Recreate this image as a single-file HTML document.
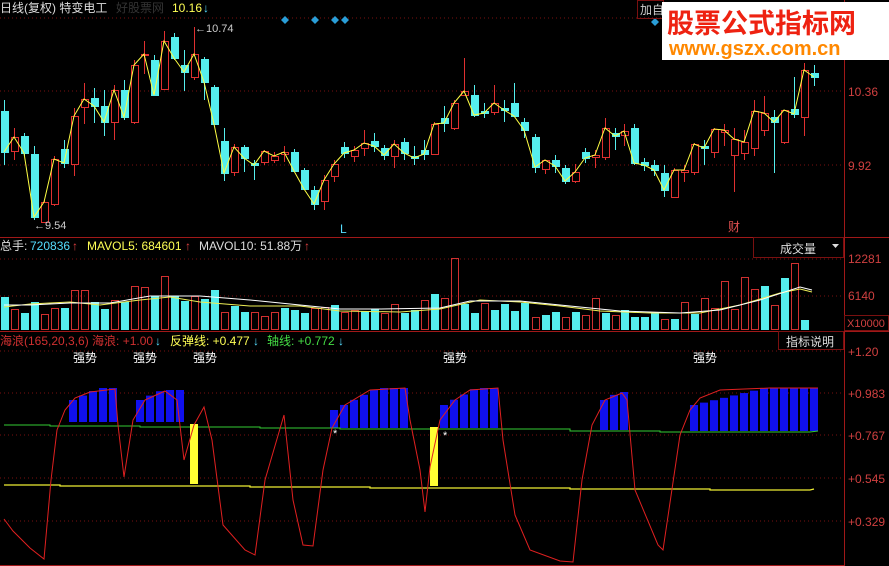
<!DOCTYPE html>
<html><head><meta charset="utf-8">
<style>
html,body{margin:0;padding:0;background:#000;width:889px;height:566px;overflow:hidden}
svg{display:block}
text{font-family:"Liberation Sans","Noto Sans CJK SC",sans-serif}
</style></head>
<body>
<svg id="s" width="889" height="566" xmlns="http://www.w3.org/2000/svg">
<rect width="889" height="566" fill="#000"/>
<!-- grid -->
<g stroke="#7a1010" stroke-dasharray="1,3" stroke-width="1">
<line x1="0" y1="18" x2="844" y2="18"/><line x1="0" y1="91" x2="844" y2="91"/><line x1="0" y1="165" x2="844" y2="165"/>
<line x1="0" y1="259" x2="844" y2="259"/><line x1="0" y1="296" x2="844" y2="296"/>
<line x1="0" y1="351" x2="844" y2="351"/><line x1="0" y1="393" x2="844" y2="393"/><line x1="0" y1="435" x2="844" y2="435"/><line x1="0" y1="478" x2="844" y2="478"/><line x1="0" y1="521" x2="844" y2="521"/>
</g>
<g stroke="#a01818" stroke-width="1">
<line x1="844.5" y1="0" x2="844.5" y2="566"/>
<line x1="0" y1="237.5" x2="889" y2="237.5"/>
<line x1="0" y1="331.5" x2="889" y2="331.5"/>
<line x1="0" y1="565.5" x2="844" y2="565.5"/>
</g>
<g id="cand"></g>
<g id="vol"></g>
<!-- header -->
<text x="0" y="12" font-size="12" fill="#ddd">日线(复权)  特变电工</text>
<text x="116" y="12" font-size="12" fill="#333">好股票网</text>
<text x="172" y="12" font-size="12" fill="#ffff55">10.16</text>
<text x="203" y="12" font-size="12" fill="#55ddff">↓</text>
<g fill="#2a9ed8"><path d="M285 16l4 4-4 4-4-4z"/><path d="M315 16l4 4-4 4-4-4z"/><path d="M335 16l4 4-4 4-4-4z"/><path d="M345 16l4 4-4 4-4-4z"/><path d="M655 18l4 4-4 4-4-4z"/></g>
<text x="195" y="32" font-size="11" fill="#ccc">←10.74</text>
<text x="34" y="229" font-size="11" fill="#ccc">←9.54</text>
<text x="340" y="233" font-size="12" fill="#55ddff">L</text>
<text x="728" y="231" font-size="12" fill="#e05050">财</text>
<rect x="637.5" y="0.5" width="26" height="18" fill="none" stroke="#7a1010"/>
<text x="640" y="14" font-size="12" fill="#ccc">加自</text>
<!-- logo -->
<rect x="662" y="2" width="227" height="58" fill="#fff"/>
<text x="667" y="33" font-size="27" font-weight="bold" fill="#ee2211" font-family="Noto Sans CJK SC,sans-serif">股票公式指标网</text>
<text x="669" y="55" font-size="20" font-weight="bold" fill="#ff8800">www.gszx.com.cn</text>
<!-- price axis -->
<text x="848" y="96" font-size="12" fill="#d04040">10.36</text>
<text x="848" y="170" font-size="12" fill="#d04040">9.92</text>
<!-- volume header -->
<text x="0" y="250" font-size="12" fill="#ddd">总手: </text>
<text x="30" y="250" font-size="12" fill="#55ddff">720836</text>
<text x="72" y="250" font-size="12" fill="#e04040">↑</text>
<text x="87" y="250" font-size="12" fill="#ffff55">MAVOL5: 684601</text>
<text x="185" y="250" font-size="12" fill="#e04040">↑</text>
<text x="199" y="250" font-size="12" fill="#ddd">MAVOL10: 51.88万</text>
<text x="304" y="250" font-size="12" fill="#e04040">↑</text>
<rect x="753.5" y="237.5" width="90" height="20" fill="none" stroke="#7a1010"/>
<text x="780" y="253" font-size="12" fill="#ddd">成交量</text>
<path d="M832 244h7l-3.5 4z" fill="#ddd"/>
<text x="848" y="263" font-size="12" fill="#d04040">12281</text>
<text x="848" y="300" font-size="12" fill="#d04040">6140</text>
<rect x="844.5" y="315.5" width="44" height="15" fill="none" stroke="#7a1010"/>
<text x="847" y="327" font-size="11" fill="#d04040">X10000</text>
<!-- indicator header -->
<text x="0" y="345" font-size="12" fill="#d03030">海浪(165,20,3,6) 海浪: +1.00</text>
<text x="155" y="345" font-size="12" fill="#55ddff">↓</text>
<text x="170" y="345" font-size="12" fill="#ffff55">反弹线: +0.477</text>
<text x="253" y="345" font-size="12" fill="#55ddff">↓</text>
<text x="267" y="345" font-size="12" fill="#44dd44">轴线: +0.772</text>
<text x="338" y="345" font-size="12" fill="#55ddff">↓</text>
<rect x="778.5" y="331.5" width="65" height="18" fill="none" stroke="#7a1010"/>
<text x="786" y="346" font-size="12" fill="#ddd">指标说明</text>
<g font-size="12" fill="#d04040">
<text x="848" y="356">+1.20</text><text x="848" y="398">+0.983</text><text x="848" y="440">+0.767</text><text x="848" y="483">+0.545</text><text x="848" y="526">+0.329</text>
</g>
<g font-size="12" fill="#fff"><text x="73" y="362">强势</text><text x="133" y="362">强势</text><text x="193" y="362">强势</text><text x="443" y="362">强势</text><text x="693" y="362">强势</text></g>
<g id="ind"></g>
<!-- lines -->
<polyline fill="none" stroke="#33cc33" stroke-width="1" points="4,425 50,425 50,426 140,426 140,427 260,427 260,428 340,428 340,429 570,429 570,431 660,431 660,432 810,432 818,431"/>
<polyline fill="none" stroke="#eeee33" stroke-width="1.3" points="4,485 60,485 60,486 250,486 250,487 370,487 370,488 570,488 570,489 710,489 710,490 810,490 814,489"/>
<rect x="190" y="424" width="8" height="60" fill="#ffff33"/>
<rect x="430" y="427" width="8" height="59" fill="#ffff33"/>
<text x="333" y="437" font-size="11" fill="#fff">*</text>
<text x="443" y="439" font-size="11" fill="#fff">*</text>
<polyline fill="none" stroke="#e02020" stroke-width="1" points="4,519 13,531 30,548 44,559 51,480 57,430 65,410 75,398 90,392 115,389 118,425 124,477 133,420 145,400 165,391 177,400 184,460 194,425 204,407 212,440 223,525 245,550 255,555 265,480 284,415 293,500 303,545 313,546 323,470 332,428 345,405 370,390 405,388 410,420 420,470 425,512 430,467 440,420 455,400 470,390 498,388 503,440 515,515 530,550 560,561 573,562 582,480 592,425 605,400 622,393 627,400 635,490 658,545 663,550 680,435 690,410 700,398 720,390 770,388 818,388"/>
</svg>
<script>
var NS="http://www.w3.org/2000/svg";
function el(p,t,a){var e=document.createElementNS(NS,t);for(var k in a)e.setAttribute(k,a[k]);p.appendChild(e);return e;}
// [x, type(1 red,0 cyan), top, bottom, high, low]
var C=[[4,0,111,152,100,165],[14,1,137,151,128,160],[24,0,136,153,133,156],[34,0,154,217,146,220],[44,1,202,222,200,222],[54,1,159,204,156,206],[64,0,149,163,140,168],[74,1,116,164,108,176],[84,1,99,107,83,124],[94,0,98,106,88,123],[104,0,106,122,90,136],[114,1,90,122,85,140],[124,0,90,117,80,120],[134,1,65,122,60,124],[144,1,54,55,41,74],[154,0,60,95,55,96],[164,1,41,89,31,90],[174,0,37,58,33,60],[184,0,65,72,50,91],[194,1,54,77,27,80],[204,0,59,82,57,100],[214,0,87,124,85,124],[224,0,141,173,128,181],[234,1,147,172,144,176],[244,0,147,158,145,172],[254,0,163,165,160,180],[264,1,151,162,150,165],[274,1,156,160,152,163],[284,1,152,154,146,162],[294,0,152,171,149,172],[304,0,170,189,168,190],[314,0,190,204,186,210],[324,1,180,201,175,210],[334,1,164,176,160,182],[344,0,147,153,142,158],[354,1,150,156,146,162],[364,1,143,148,130,156],[374,0,141,146,133,152],[384,0,148,155,145,160],[394,1,144,156,140,168],[404,0,142,153,138,160],[414,0,156,158,146,165],[424,0,150,154,140,160],[434,1,124,154,122,155],[444,0,118,123,106,132],[454,1,103,128,100,130],[464,1,91,95,58,96],[474,0,95,115,85,117],[484,0,111,113,103,118],[494,1,103,112,85,115],[504,0,108,110,100,122],[514,0,103,116,83,117],[524,0,122,130,118,138],[535,0,137,167,134,173],[545,1,160,169,162,174],[555,0,160,166,155,173],[565,0,168,181,165,184],[575,1,172,181,164,183],[585,0,152,158,148,163],[595,1,155,157,150,168],[605,1,128,157,118,160],[615,0,133,136,128,150],[624,1,131,135,124,146],[634,0,128,163,124,165],[644,0,162,165,158,171],[654,0,165,170,160,176],[664,0,173,190,165,197],[674,1,170,197,168,198],[684,1,170,172,165,182],[694,1,144,172,143,175],[704,0,146,148,140,165],[714,1,129,152,128,158],[724,1,130,132,124,146],[734,1,139,155,128,192],[744,1,142,153,130,160],[754,1,111,148,100,156],[764,1,113,130,96,136],[774,0,117,122,110,173],[784,1,110,142,110,144],[794,0,109,114,77,118],[804,1,70,117,63,136],[814,0,73,77,65,86]];
var g=document.getElementById("cand");
var ma=[];
C.forEach(function(c){var col=c[1]?"#e03030":"#55eeee";
el(g,"line",{x1:c[0]+0.5,y1:c[4],x2:c[0]+0.5,y2:c[5],stroke:col});
var h=Math.max(c[3]-c[2],1);
if(c[1])el(g,"rect",{x:c[0]-3+0.5,y:c[2]+0.5,width:7,height:h,fill:"#000",stroke:col});
else el(g,"rect",{x:c[0]-3,y:c[2],width:8,height:h+1,fill:col});
ma.push(c[0]+","+(c[1]?c[2]:c[3]));});
el(g,"polyline",{points:ma.join(" "),fill:"none",stroke:"#ffff44","stroke-width":1});
// volume
var V=[[0,297],[1,309],[0,313],[0,302],[1,314],[1,308],[0,308],[1,290],[1,290],[0,302],[0,309],[1,300],[0,302],[1,286],[1,287],[0,296],[1,276],[0,296],[0,301],[1,296],[0,299],[0,290],[1,312],[0,306],[0,312],[1,312],[1,316],[1,312],[0,308],[0,310],[0,313],[1,308],[1,307],[0,305],[1,312],[1,310],[0,311],[0,309],[1,313],[1,304],[0,313],[0,310],[1,300],[0,294],[1,298],[1,258],[0,304],[0,313],[1,303],[0,310],[0,304],[0,311],[0,303],[1,317],[0,315],[0,312],[1,317],[0,312],[1,315],[1,298],[0,313],[1,315],[0,310],[0,317],[0,317],[0,313],[1,319],[0,319],[1,302],[0,314],[1,298],[1,308],[1,281],[1,309],[1,277],[1,289],[0,286],[1,305],[0,278],[1,263],[0,320]];
var gv=document.getElementById("vol");
V.forEach(function(v,i){var x=C[i]?C[i][0]:4+i*10;
if(v[0])el(gv,"rect",{x:x-3+0.5,y:v[1]+0.5,width:7,height:330-v[1]-1,fill:"none",stroke:"#d03030"});
else el(gv,"rect",{x:x-3,y:v[1],width:8,height:330-v[1],fill:"#55eeee"});});
el(gv,"polyline",{points:"4,307 30,304 70,302 100,305 140,300 170,297 200,302 250,306 300,306 340,311 400,312 440,309 480,300 520,302 560,306 600,311 650,313 700,313 740,305 780,293 800,289 812,292",fill:"none",stroke:"#eeee55"});
el(gv,"polyline",{points:"4,305 30,305 70,303 110,303 150,296 200,296 250,300 300,305 340,309 380,309 440,308 470,301 520,301 570,306 620,311 680,313 720,310 760,300 800,287 812,290",fill:"none",stroke:"#fff"});
// indicator blue bars
var gi=document.getElementById("ind");
var B=[[69,117,400,388,422],[136,177,400,390,422],[330,408,410,388,428],[440,498,405,388,428],[600,628,400,392,430],[690,818,405,388,431]];
var red=document.querySelector("polyline[stroke='#e02020']");
B.forEach(function(b){for(var x=b[0];x<b[1];x+=10){var t=(x-b[0])/Math.max(b[1]-b[0],1);var top=b[2]+(b[3]-b[2])*Math.min(1,t*1.8);
el(gi,"rect",{x:x,y:top,width:8,height:b[4]-top,fill:"#1010ee"});}});
</script>
</body></html>
